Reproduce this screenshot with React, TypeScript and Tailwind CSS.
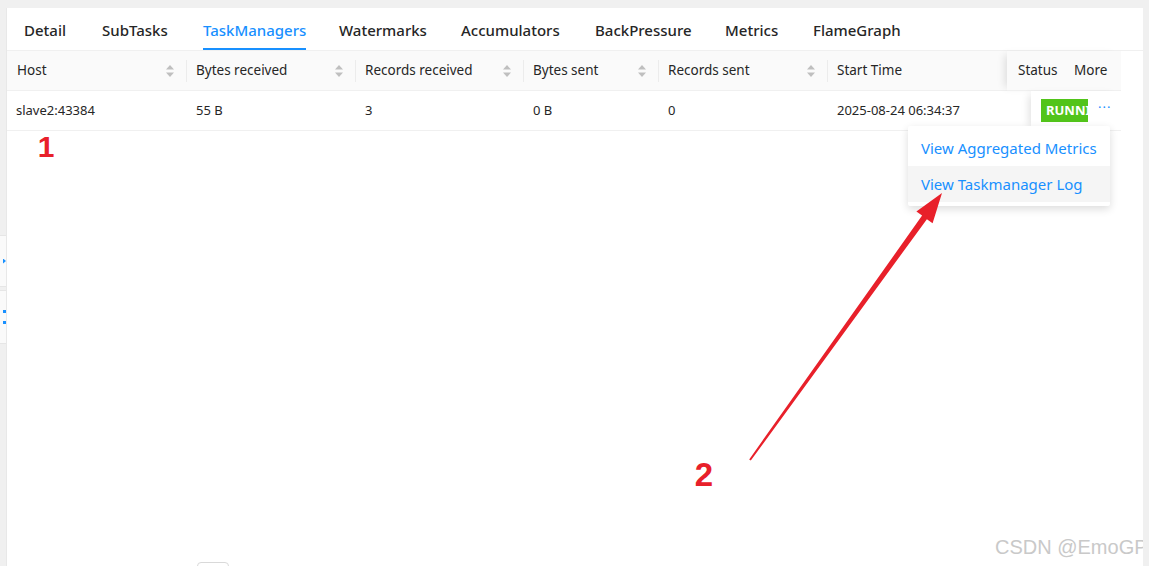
import React from "react";

const font = { fontFamily: '"Noto Sans", "Open Sans", Arial, sans-serif' };

const tabs = [
  { label: "Detail", w: "w-[78px]" },
  { label: "SubTasks", w: "w-[101px]" },
  { label: "TaskManagers", w: "w-[136px]", active: true },
  { label: "Watermarks", w: "w-[122px]" },
  { label: "Accumulators", w: "w-[134px]" },
  { label: "BackPressure", w: "w-[130px]" },
  { label: "Metrics", w: "w-[88px]" },
  { label: "FlameGraph", w: "w-[120px]" },
];

function SortIcon() {
  return (
    <svg width="10" height="14" viewBox="0 0 10 14" className="shrink-0">
      <path d="M5 1 L9 5.5 H1 Z" fill="#bfbfbf" />
      <path d="M5 13 L9 8.5 H1 Z" fill="#bfbfbf" />
    </svg>
  );
}

function HeadCell({ label, w, sort, first }: { label: string; w: string; sort?: boolean; first?: boolean }) {
  return (
    <div className={`${w} relative flex h-full shrink-0 items-center justify-between pl-[10px] pr-[11px]`}>
      {!first && <span className="absolute left-0 top-[9px] h-[22px] w-px bg-[#ececec]" />}
      <span>{label}</span>
      {sort && <SortIcon />}
    </div>
  );
}

const numStyle: React.CSSProperties = {
  fontFamily: '"Liberation Sans", Arial, sans-serif',
  paintOrder: "stroke",
};

export default function App() {
  return (
    <div
      className="relative h-[566px] w-[1149px] overflow-hidden bg-[#f0f0f0] text-[#262626]"
      style={font}
    >
      <div className="h-[8px]" />
      <div className="flex h-[558px]">
        {/* collapsed side handles */}
        <div className="flex w-[6px] shrink-0 flex-col pt-[227px]">
          <div className="flex h-[52px] items-center justify-end border-y border-[#e6e6e6] bg-[#fafafa]">
            <span className="h-[5px] w-[3px] bg-[#1890ff] [clip-path:polygon(0_0,100%_50%,0_100%)]" />
          </div>
          <div className="mt-[3px] flex h-[54px] flex-col items-end justify-center gap-[8px] border-y border-[#e6e6e6] bg-[#fafafa]">
            <span className="h-[3px] w-[3px] bg-[#1890ff]" />
            <span className="h-[3px] w-[3px] bg-[#1890ff]" />
          </div>
        </div>

        {/* main panel */}
        <div className="flex w-[1137px] shrink-0 flex-col border-l border-[#e8e8e8] bg-white">
          <div className="flex h-[43px] shrink-0 items-end border-b border-[#f0f0f0] pl-[17px] text-[15px]">
            {tabs.map((t) => (
              <div key={t.label} className={`${t.w} shrink-0`}>
                <span
                  className={`inline-block pb-[7px] font-medium ${
                    t.active ? "border-b-2 border-[#1890ff] text-[#1890ff]" : "border-b-2 border-transparent"
                  }`}
                >
                  {t.label}
                </span>
              </div>
            ))}
          </div>

          {/* table header */}
          <div className="flex w-[1114px] shrink-0 text-[13.5px]">
            <div className="flex h-[40px] w-[1000px] items-center border-b border-[#f0f0f0] bg-[#fafafa]">
              <HeadCell label="Host" w="w-[179px]" sort first />
              <HeadCell label="Bytes received" w="w-[169px]" sort />
              <HeadCell label="Records received" w="w-[168px]" sort />
              <HeadCell label="Bytes sent" w="w-[135px]" sort />
              <HeadCell label="Records sent" w="w-[169px]" sort />
              <HeadCell label="Start Time" w="w-[180px]" />
            </div>
            <div className="flex h-[40px] w-[114px] items-center border-b border-[#f0f0f0] bg-[#fafafa] pl-[11px] shadow-[-6px_0_8px_-4px_rgba(0,0,0,0.12)]">
              <span className="w-[56px]">Status</span>
              <span>More</span>
            </div>
          </div>

          {/* table row */}
          <div className="flex h-[40px] w-[1114px] shrink-0 text-[13px]">
            <div className="flex h-full w-[1024px] items-center border-b border-[#f0f0f0]">
              <div className="w-[179px] pl-[9px]">slave2:43384</div>
              <div className="w-[169px] pl-[10px]">55 B</div>
              <div className="w-[168px] pl-[10px]">3</div>
              <div className="w-[135px] pl-[10px]">0 B</div>
              <div className="w-[169px] pl-[10px]">0</div>
              <div className="w-[180px] pl-[10px]">2025-08-24 06:34:37</div>
            </div>
            <div className="flex h-full w-[90px] items-center border-b border-[#f0f0f0] bg-white pl-[10px] shadow-[-6px_0_8px_-4px_rgba(0,0,0,0.12)]">
              <div className="h-[23px] w-[47px] shrink-0 overflow-hidden bg-[#52c41a]">
                <span className="block pl-[5px] text-[13px] font-bold leading-[23px] whitespace-nowrap text-white">RUNNING</span>
              </div>
              <span className="ml-[10px] pb-[6px] text-[13px] tracking-[1px] text-[#1890ff]">···</span>
            </div>
          </div>

          {/* pagination (cut off at bottom) */}
          <div className="ml-[190px] mt-[431px] h-[32px] w-[32px] shrink-0 rounded-[4px] border border-[#d9d9d9]" />
        </div>
      </div>

      {/* dropdown menu */}
      <div className="absolute left-[908px] top-[126px] w-[202px] rounded-[2px] bg-white py-[4px] text-[15px] text-[#1890ff] shadow-[0_3px_8px_rgba(0,0,0,0.14)]">
        <div className="flex h-[36px] items-center pl-[13px]">View Aggregated Metrics</div>
        <div className="flex h-[36px] items-center bg-[#f5f5f5] pl-[13px]">View Taskmanager Log</div>
      </div>

      {/* watermark */}
      <div
        className="absolute left-[995px] top-[532px] whitespace-nowrap text-[20px] text-[#c9c9c9] [text-shadow:0_0_2px_#fff]"
        style={{ fontFamily: '"Liberation Sans", Arial, sans-serif' }}
      >
        CSDN @EmoGP
      </div>
      <div className="absolute right-0 top-0 h-[566px] w-[6px] bg-[#f0f0f0]" />

      {/* annotations */}
      <svg className="pointer-events-none absolute left-0 top-0" width="1149" height="566">
        <text x="46" y="157" textAnchor="middle" fontSize="30" fontWeight="700" fill="#e8202a" stroke="#fff" strokeWidth="3" style={numStyle}>
          1
        </text>
        <text x="704" y="486" textAnchor="middle" fontSize="33" fontWeight="700" fill="#e8202a" stroke="#fff" strokeWidth="3" style={numStyle}>
          2
        </text>
        <polygon
          points="750.8,460.6 926.9,219.2 932.6,223.2 942,193 916.4,211.6 922.1,215.6 749.2,459.4"
          fill="#e8202a"
        />
      </svg>
    </div>
  );
}
